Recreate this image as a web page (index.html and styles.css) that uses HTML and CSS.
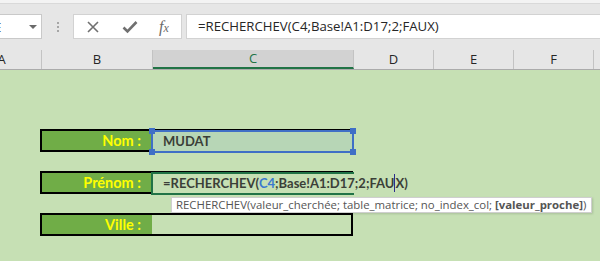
FILE: index.html
```html
<!DOCTYPE html>
<html lang="fr">
<head>
<meta charset="utf-8">
<title>RECHERCHEV</title>
<link rel="stylesheet" href="styles.css">
</head>
<body>
<div class="app">
  <div class="ribbon-edge"></div>
  <div class="fbar">
    <div class="namebox"><span class="nb-text">E</span><span class="nb-arrow"></span></div>
    <div class="grip"><i></i><i></i><i></i></div>
    <div class="btns">
      <svg class="ico-x" width="14" height="14" viewBox="0 0 14 14"><path d="M2 2 L12 12 M12 2 L2 12" stroke="#707070" stroke-width="1.6" fill="none"/></svg>
      <svg class="ico-ok" width="16" height="14" viewBox="0 0 16 14"><path d="M1.5 7.5 L5.5 11.5 L14.5 2" stroke="#707070" stroke-width="2.6" fill="none"/></svg>
      <span class="fx">f<span class="fx-x">x</span></span>
    </div>
    <div class="formula">=RECHERCHEV(C4;Base!A1:D17;2;FAUX)</div>
  </div>
  <div class="colheads">
    <div class="ch ch-a">A</div>
    <div class="ch ch-b">B</div>
    <div class="ch ch-c">C</div>
    <div class="ch ch-d">D</div>
    <div class="ch ch-e">E</div>
    <div class="ch ch-f">F</div>
    <div class="ch ch-g"></div>
  </div>
  <div class="sheet">
    <div class="frow">
      <div class="lbl">Nom :</div>
      <div class="sel">
        <span class="sel-text">MUDAT</span>
        <i class="hd hd-tl"></i><i class="hd hd-tr"></i><i class="hd hd-bl"></i><i class="hd hd-br"></i>
      </div>
    </div>
    <div class="frow">
      <div class="lbl">Prénom :</div>
      <div class="edit">
        <span class="edit-text">=RECHERCHEV(<span class="ref">C4</span>;Base!A1:D17;2;FAU<span class="caret"></span>X)</span>
      </div>
      <div class="tip">RECHERCHEV(valeur_cherchée; table_matrice; no_index_col; <b>[valeur_proche]</b>)</div>
    </div>
    <div class="frow">
      <div class="lbl">Ville :</div>
    </div>
  </div>
</div>
</body>
</html>
```

FILE: styles.css
```css
html, body {
  margin: 0;
  padding: 0;
}
body {
  width: 600px;
  height: 261px;
  overflow: hidden;
  background: #c6e0b4;
  font-family: "Open Sans", "Noto Sans", sans-serif;
}
.app {
  width: 600px;
  height: 261px;
  overflow: hidden;
  display: flex;
  flex-direction: column;
}
.ribbon-edge {
  height: 3px;
  background: #f3f3f3;
  border-bottom: 1px solid #d9d9d9;
}
.fbar {
  height: 46px;
  box-sizing: border-box;
  padding-top: 10px;
  background: #e6e6e6;
  display: flex;
  align-items: flex-start;
}
.namebox {
  width: 43px;
  height: 25px;
  margin-left: -1px;
  box-sizing: border-box;
  background: #fff;
  border: 1px solid #c9c9c9;
  display: flex;
  align-items: center;
  position: relative;
  overflow: hidden;
}
.nb-text {
  font-size: 13px;
  color: #333;
  margin-left: -6px;
}
.nb-arrow {
  position: absolute;
  left: 29px;
  top: 10px;
  width: 0;
  height: 0;
  border-left: 4px solid transparent;
  border-right: 4px solid transparent;
  border-top: 4px solid #6a6a6a;
}
.grip {
  margin-left: 15px;
  margin-top: 8px;
  width: 2px;
  display: flex;
  flex-direction: column;
  gap: 2px;
}
.grip i {
  display: block;
  width: 2px;
  height: 2px;
  background: #a6a6a6;
}
.btns {
  margin-left: 14px;
  width: 109px;
  height: 25px;
  box-sizing: border-box;
  background: #fff;
  border: 1px solid #d2d2d2;
  display: flex;
  align-items: center;
}
.ico-x {
  margin-left: 12px;
}
.ico-ok {
  margin-left: 22px;
}
.fx {
  margin-left: 21px;
  font-family: "Liberation Serif", "DejaVu Serif", serif;
  font-style: italic;
  font-size: 16px;
  color: #6a6a6a;
  line-height: 1;
}
.fx-x {
  font-size: 12px;
}
.formula {
  margin-left: 4px;
  flex: 1;
  height: 25px;
  box-sizing: border-box;
  background: #fff;
  border: 1px solid #d2d2d2;
  border-right: none;
  padding-left: 11px;
  font-size: 13.2px;
  line-height: 23px;
  color: #262626;
  white-space: nowrap;
}
.colheads {
  height: 20px;
  box-sizing: border-box;
  background: #e6e6e6;
  border-bottom: 1px solid #ababab;
  display: flex;
}
.ch {
  flex: none;
  box-sizing: border-box;
  border-right: 1px solid #c3c3c3;
  text-align: center;
  font-size: 13px;
  line-height: 19px;
  color: #262626;
}
.ch-a { width: 80px; margin-left: -38px; }
.ch-b { width: 111px; }
.ch-c {
  width: 201px;
  background: #d2d2d2;
  color: #217346;
  border-bottom: 2px solid #217346;
  line-height: 17px;
}
.ch-d, .ch-e, .ch-f { width: 80px; }
.ch-g { flex: 1; border-right: none; }
.sheet {
  flex: 1;
  background: #c6e0b4;
  padding-top: 59px;
  display: flex;
  flex-direction: column;
  gap: 19px;
  font-family: "Lato", "Open Sans", sans-serif;
}
.frow {
  position: relative;
  margin-left: 40px;
  width: 313px;
  height: 23px;
  box-sizing: border-box;
  border: 2px solid #000;
  display: flex;
}
.lbl {
  width: 110px;
  height: 19px;
  background: #70ad47;
  color: #ffff00;
  font-weight: 700;
  font-size: 14.5px;
  line-height: 19px;
  text-align: right;
  padding-right: 11px;
  box-sizing: border-box;
}
.sel {
  position: absolute;
  left: 109px;
  top: -1px;
  width: 203px;
  height: 23px;
  box-sizing: border-box;
  border: 2px solid #3f6fc6;
  background: #b7d6b6;
  padding-left: 10px;
  font-weight: 700;
  font-size: 13px;
  line-height: 19px;
  color: #3b3f38;
}
.hd {
  position: absolute;
  width: 6px;
  height: 6px;
  background: #3f6fc6;
}
.hd-tl { left: -4px; top: -4px; }
.hd-tr { right: -4px; top: -4px; }
.hd-bl { left: -4px; bottom: -4px; }
.hd-br { right: -4px; bottom: -4px; }
.edit {
  position: absolute;
  left: 109px;
  top: -1px;
  width: 203px;
  height: 23px;
  box-sizing: border-box;
  border: 2px solid #217346;
  border-right: none;
}
.edit-text {
  display: block;
  width: 256px;
  height: 19px;
  box-sizing: border-box;
  background: #c6e0b4;
  padding-left: 10px;
  white-space: nowrap;
  font-weight: 700;
  font-size: 13px;
  line-height: 19px;
  color: #3b3f38;
}
.ref {
  color: #3a78d0;
}
.caret {
  display: inline-block;
  width: 1px;
  height: 18px;
  background: #2c2c8c;
  vertical-align: -4px;
}
.tip {
  position: absolute;
  left: 129px;
  top: 24px;
  width: 421px;
  height: 16px;
  box-sizing: border-box;
  background: #fff;
  border: 1px solid #cfcfcf;
  box-shadow: 1px 1px 2px rgba(0,0,0,0.15);
  padding-left: 4px;
  font-family: "Open Sans", "Noto Sans", sans-serif;
  font-size: 11.4px;
  line-height: 14px;
  color: #555;
  white-space: nowrap;
  z-index: 2;
}
.tip b {
  font-weight: 700;
}
```
